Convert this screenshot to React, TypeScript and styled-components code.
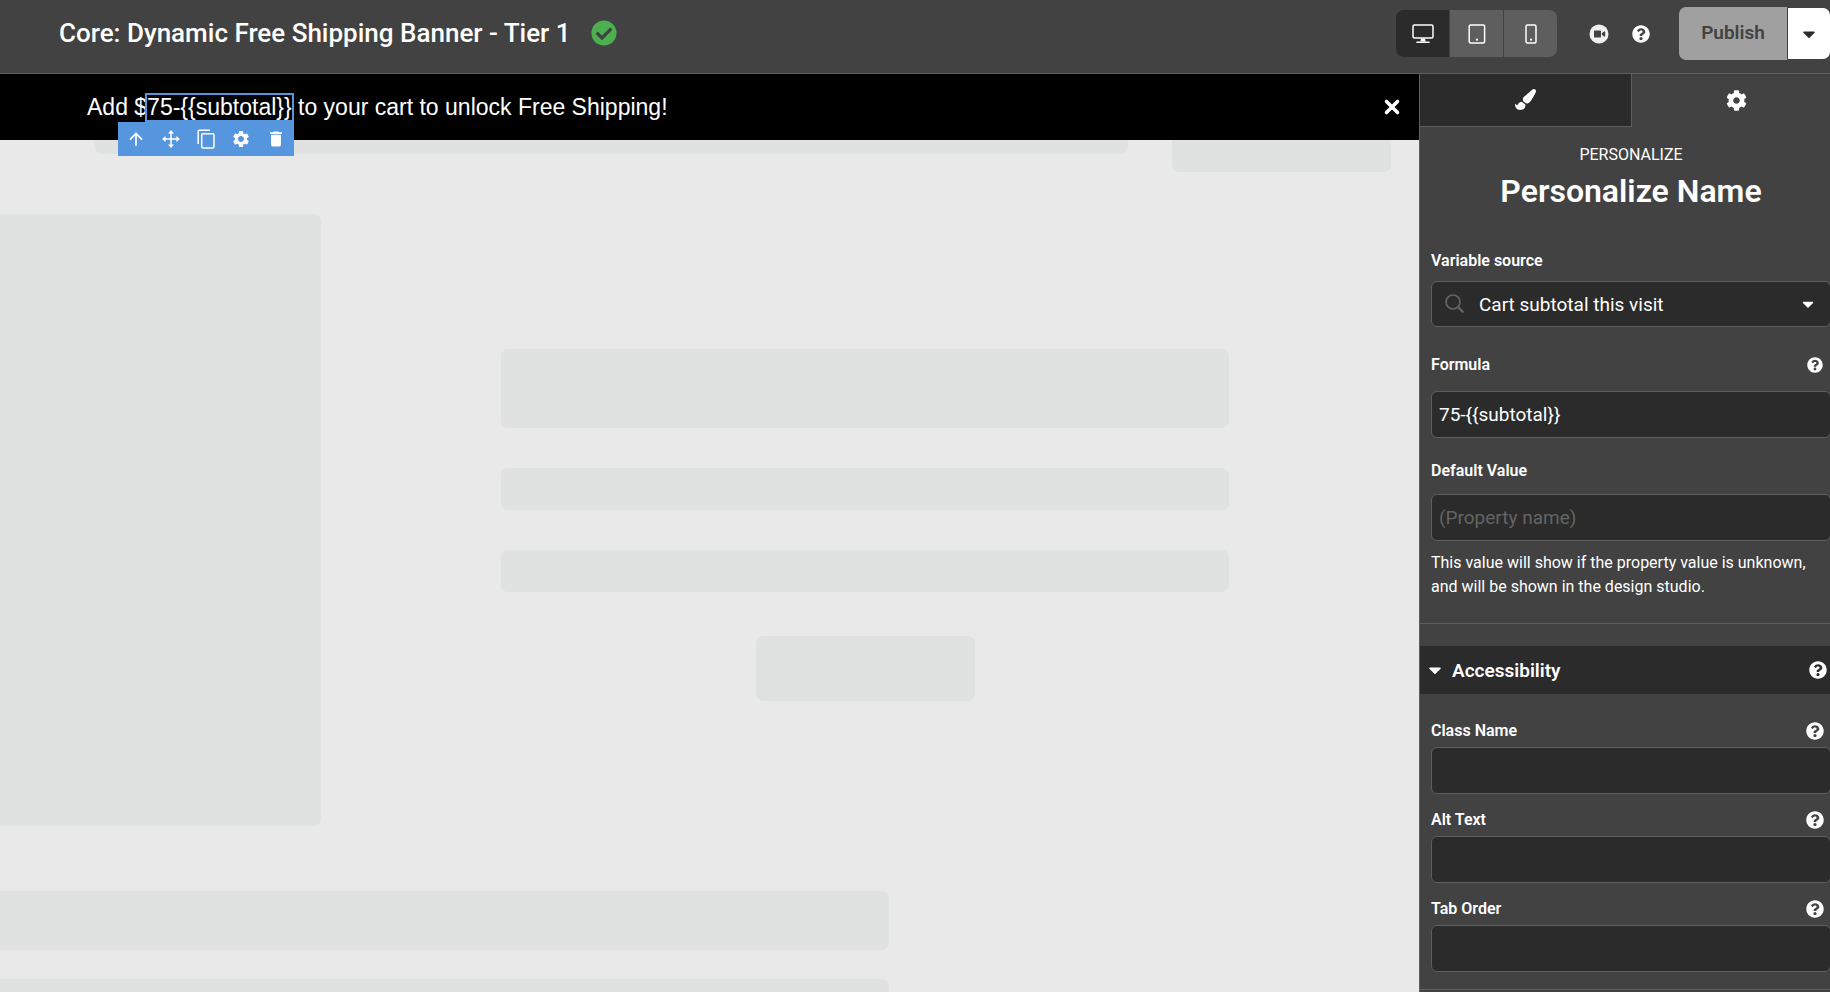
import React from "react";
import styled, { createGlobalStyle, css } from "styled-components";
import { FaCaretDown, FaCog, FaPaintBrush, FaQuestionCircle, FaCheckCircle } from "react-icons/fa";
import { MdArrowUpward, MdSettings, MdDelete } from "react-icons/md";

const color = {
  chrome: "#424242",
  dark: "#2b2b2b",
  line: "#5e5e5e",
  canvas: "#e9e9e9",
  block: "#dfe2e1",
  accent: "#5596de",
  white: "#ffffff",
};

const GlobalStyle = createGlobalStyle`
  *, *::before, *::after { box-sizing: border-box; }
  body {
    margin: 0;
    background: ${color.chrome};
    color: ${color.white};
    font-family: Roboto, "Liberation Sans", sans-serif;
    font-size: 16px;
  }
  button, input, select { font: inherit; color: inherit; margin: 0; }
  button { padding: 0; border: 0; cursor: pointer; }
  h1, h2, h3, p { margin: 0; }
  svg { display: block; flex: none; }
`;

const Studio = styled.div`
  display: flex;
  flex-direction: column;
  height: 100vh;
  overflow: hidden;
`;

const Header = styled.header`
  display: flex;
  align-items: center;
  flex: none;
  padding: 7px 0 13px 59px;
  border-bottom: 1px solid ${color.line};
`;

const CampaignName = styled.div`
  display: flex;
  align-items: center;
  gap: 20px;
  padding-bottom: 2px;
`;

const Title = styled.h1`
  font-size: 26px;
  line-height: 32px;
  font-weight: 500;
  white-space: nowrap;
`;

const Saved = styled.span`
  color: #4caf50;
  font-size: 26px;
`;

const DeviceSwitch = styled.div`
  display: flex;
  gap: 1px;
  margin-left: auto;
  height: 47px;
  border-radius: 8px;
  overflow: hidden;
`;

const DeviceButton = styled.button<{ $active?: boolean }>`
  display: flex;
  align-items: center;
  justify-content: center;
  width: 53px;
  background: ${(p) => (p.$active ? color.dark : color.line)};
`;

const HeaderIcons = styled.div`
  display: flex;
  align-items: center;
  gap: 23px;
  margin: 0 29px 0 32px;
`;

const IconButton = styled.button<{ $size: number }>`
  display: flex;
  justify-content: center;
  min-width: 18px;
  background: none;
  color: ${color.white};
  font-size: ${(p) => p.$size}px;
`;

const PublishGroup = styled.div`
  display: flex;
  align-items: center;
  gap: 1px;
`;

const PublishButton = styled.button`
  width: 108px;
  height: 53px;
  padding-bottom: 2px;
  border-radius: 7px 0 0 7px;
  background: #a0a0a0;
  color: ${color.chrome};
  font-size: 19px;
  font-weight: 600;
`;

const PublishMenu = styled.button`
  display: flex;
  align-items: center;
  justify-content: center;
  width: 42px;
  height: 51px;
  border-radius: 0 7px 7px 0;
  background: ${color.white};
  color: ${color.dark};
  font-size: 20px;
`;

const Workspace = styled.div`
  display: flex;
  flex: 1;
  min-height: 0;
`;

const Canvas = styled.main`
  flex: 1;
  min-width: 0;
  overflow: hidden;
  background: ${color.canvas};
`;

const Banner = styled.div`
  display: flex;
  align-items: center;
  justify-content: space-between;
  height: 66px;
  padding: 0 18px 0 87px;
  background: #000;
`;

const BannerText = styled.p`
  font-family: "Liberation Sans", Arial, sans-serif;
  font-size: 23px;
  line-height: 25px;
  white-space: nowrap;
`;

const Selection = styled.span`
  position: relative;
  display: inline-block;
  outline: 2px solid ${color.accent};
`;

const SelectionTools = styled.div`
  position: absolute;
  z-index: 1;
  top: 27px;
  left: -29px;
  right: -2px;
  display: flex;
  align-items: center;
  height: 34px;
  background: ${color.accent};
`;

const ToolButton = styled.button`
  display: flex;
  flex: 1;
  align-items: center;
  justify-content: center;
  background: none;
  color: ${color.white};
  font-size: 20px;
`;

const Block = styled.div<{ $height: number; $width?: number }>`
  flex: ${(p) => (p.$width ? "none" : "auto")};
  width: ${(p) => (p.$width ? `${p.$width}px` : "auto")};
  height: ${(p) => p.$height}px;
  border-radius: 7px;
  background: ${color.block};
`;

const SiteNav = styled.div`
  display: flex;
  gap: 44px;
  height: 74px;
  padding: 0 28px 0 95px;
  & > ${Block} {
    border-top-left-radius: 0;
    border-top-right-radius: 0;
  }
`;

const SiteHero = styled.div`
  display: flex;
  & > ${Block}:first-child {
    border-top-left-radius: 0;
    border-bottom-left-radius: 0;
  }
`;

const HeroCopy = styled.div`
  display: flex;
  flex: 1;
  flex-direction: column;
  gap: 40px;
  padding: 135px 190px 0 180px;
  & > ${Block} {
    flex: none;
  }
`;

const HeroAction = styled.div`
  display: flex;
  justify-content: center;
  padding-top: 4px;
`;

const SiteFooter = styled.div`
  display: flex;
  flex-direction: column;
  gap: 29px;
  padding: 65px 530px 0 0;
  & > ${Block} {
    border-top-left-radius: 0;
    border-bottom-left-radius: 0;
  }
`;

const Panel = styled.aside`
  flex: none;
  width: 411px;
  overflow: hidden;
  border-left: 1px solid ${color.line};
`;

/* The settings column is a little wider than the visible panel. */
const PanelBody = styled.div`
  width: 422px;
`;

const Tabs = styled.div`
  display: flex;
  height: 53px;
`;

const Tab = styled.button<{ $active?: boolean }>`
  display: flex;
  flex: 1;
  align-items: center;
  justify-content: center;
  padding-bottom: 1px;
  background: none;
  font-size: 21px;
  ${(p) =>
    !p.$active &&
    css`
      background: ${color.dark};
      border-right: 1px solid ${color.line};
      border-bottom: 1px solid ${color.line};
    `}
`;

const PanelHeading = styled.div`
  display: flex;
  flex-direction: column;
  align-items: center;
  padding: 16px 0 34px;
`;

const Eyebrow = styled.p`
  line-height: 24px;
`;

const ElementName = styled.h2`
  font-size: 32px;
  line-height: 48px;
  font-weight: 600;
`;

const Section = styled.div<{ $top: number; $bottom: number }>`
  padding: ${(p) => p.$top}px 11px ${(p) => p.$bottom}px;
  border-bottom: 1px solid ${color.line};
`;

const FieldHead = styled.div<{ $space: number }>`
  display: flex;
  align-items: center;
  justify-content: space-between;
  height: 24px;
  padding-right: 7px;
  margin-bottom: ${(p) => p.$space}px;
`;

const Label = styled.label`
  line-height: 24px;
  font-weight: 600;
`;

const Field = styled.div<{ $after: number }>`
  margin-bottom: ${(p) => p.$after}px;
`;

const TextInput = styled.input`
  display: block;
  width: 100%;
  height: 47px;
  padding: 0 7px;
  border: 1px solid ${color.line};
  border-radius: 6px;
  background: ${color.dark};
  font-size: 19px;
  outline: none;
  &::placeholder {
    color: #646464;
    opacity: 1;
  }
`;

const SelectBox = styled.div`
  display: flex;
  align-items: center;
  height: 46px;
  padding: 0 13px;
  border: 1px solid ${color.line};
  border-radius: 6px;
  background: ${color.dark};
`;

const Select = styled.select`
  flex: 1;
  min-width: 0;
  padding: 0;
  margin: 0 14px;
  border: 0;
  appearance: none;
  background: transparent;
  font-size: 19px;
  outline: none;
`;

const Hint = styled.p`
  padding-top: 10px;
  line-height: 24px;
`;

const AccordionBar = styled.div`
  display: flex;
  align-items: center;
  justify-content: space-between;
  height: 48px;
  margin-top: 22px;
  padding: 0 15px 0 5px;
  background: ${color.dark};
`;

const AccordionToggle = styled.button`
  display: flex;
  align-items: center;
  gap: 7px;
  background: none;
  font-size: 19px;
  font-weight: 600;
`;

const DesktopIcon = () => (
  <svg width="22" height="20" viewBox="0 0 22 20" fill="none" stroke="currentColor">
    <rect x="1" y="1" width="20" height="13" rx="1.5" strokeWidth="1.5" />
    <path d="M9 14.5h4l.6 3H8.4z" fill="currentColor" stroke="none" />
    <path d="M5 18.2h12" strokeWidth="1.6" strokeLinecap="round" />
  </svg>
);

const TabletIcon = () => (
  <svg width="18" height="20" viewBox="0 0 18 20" fill="none" stroke="currentColor" strokeWidth="1.5">
    <rect x="1.2" y="1" width="15.4" height="18" rx="1.5" />
    <circle cx="9" cy="15.7" r="1.1" fill="currentColor" stroke="none" />
  </svg>
);

const PhoneIcon = () => (
  <svg width="12" height="20" viewBox="0 0 12 20" fill="none" stroke="currentColor" strokeWidth="1.5">
    <rect x="1" y="1" width="10" height="18" rx="1.5" />
    <circle cx="6" cy="15.7" r="1.1" fill="currentColor" stroke="none" />
  </svg>
);

const VideoIcon = () => (
  <svg width="20" height="20" viewBox="0 0 20 20">
    <circle cx="10" cy="10" r="9.5" fill="#f1f1f1" />
    <rect x="5" y="6.5" width="7" height="7" rx=".6" fill={color.chrome} />
    <path d="M12.8 9.2 15 7.4q1.2-.5 1.2.6v4q0 1.1-1.2.6l-2.2-1.8z" fill={color.chrome} />
  </svg>
);

const MoveIcon = () => (
  <svg width="18" height="18" viewBox="0 0 18 18">
    <path d="M9 2v14M2 9h14" stroke="currentColor" strokeWidth="1.5" />
    <path d="M9 0l3 3.6H6zM9 18l3-3.6H6zM0 9l3.6-3v6zM18 9l-3.6-3v6z" fill="currentColor" />
  </svg>
);

const CopyIcon = () => (
  <svg width="18" height="20" viewBox="0 0 18 20" fill="none" stroke="currentColor" strokeWidth="1.5">
    <path d="M1.2 15V2.2q0-1 1-1H13" />
    <rect x="4.7" y="4.7" width="12.3" height="14.3" rx="1.3" />
  </svg>
);

const CloseIcon = () => (
  <svg width="18" height="18" viewBox="0 0 18 18" fill="none" stroke="currentColor">
    <path d="M3.5 3.5l11 11M14.5 3.5l-11 11" strokeWidth="3.6" strokeLinecap="round" />
  </svg>
);

const SearchIcon = () => (
  <svg width="20" height="20" viewBox="0 0 20 20" fill="none" stroke="#646464">
    <circle cx="8" cy="8" r="7" strokeWidth="1.7" />
    <path d="M13 13l5.5 5.5" strokeWidth="2.2" />
  </svg>
);

type FieldProps = {
  id: string;
  label: string;
  space: number;
  after: number;
  helpSize?: number;
  children: React.ReactNode;
};

const LabeledField = ({ id, label, space, after, helpSize, children }: FieldProps) => (
  <Field $after={after}>
    <FieldHead $space={space}>
      <Label htmlFor={id}>{label}</Label>
      {helpSize && (
        <IconButton $size={helpSize} aria-label={`Help: ${label}`}>
          <FaQuestionCircle />
        </IconButton>
      )}
    </FieldHead>
    {children}
  </Field>
);

const accessibilityFields = [
  { id: "class-name", label: "Class Name" },
  { id: "alt-text", label: "Alt Text" },
  { id: "tab-order", label: "Tab Order" },
];

export default function App() {
  return (
    <Studio>
      <GlobalStyle />
      <Header>
        <CampaignName>
          <Title>Core: Dynamic Free Shipping Banner - Tier 1</Title>
          <Saved>
            <FaCheckCircle />
          </Saved>
        </CampaignName>
        <DeviceSwitch>
          <DeviceButton $active aria-label="Desktop">
            <DesktopIcon />
          </DeviceButton>
          <DeviceButton aria-label="Tablet">
            <TabletIcon />
          </DeviceButton>
          <DeviceButton aria-label="Phone">
            <PhoneIcon />
          </DeviceButton>
        </DeviceSwitch>
        <HeaderIcons>
          <IconButton $size={20} aria-label="Video tutorial">
            <VideoIcon />
          </IconButton>
          <IconButton $size={18} aria-label="Help">
            <FaQuestionCircle />
          </IconButton>
        </HeaderIcons>
        <PublishGroup>
          <PublishButton>Publish</PublishButton>
          <PublishMenu aria-label="Publish options">
            <FaCaretDown />
          </PublishMenu>
        </PublishGroup>
      </Header>

      <Workspace>
        <Canvas>
          <Banner>
            <BannerText>
              Add $
              <Selection>
                75-{"{{subtotal}}"}
                <SelectionTools>
                  <ToolButton aria-label="Select parent">
                    <MdArrowUpward />
                  </ToolButton>
                  <ToolButton aria-label="Move">
                    <MoveIcon />
                  </ToolButton>
                  <ToolButton aria-label="Duplicate">
                    <CopyIcon />
                  </ToolButton>
                  <ToolButton aria-label="Settings">
                    <MdSettings />
                  </ToolButton>
                  <ToolButton aria-label="Delete">
                    <MdDelete />
                  </ToolButton>
                </SelectionTools>
              </Selection>{" "}
              to your cart to unlock Free Shipping!
            </BannerText>
            <IconButton $size={18} aria-label="Close banner">
              <CloseIcon />
            </IconButton>
          </Banner>
          <SiteNav>
            <Block $height={14} />
            <Block $height={32} $width={219} />
          </SiteNav>
          <SiteHero>
            <Block $height={612} $width={321} />
            <HeroCopy>
              <Block $height={79} />
              <Block $height={42} />
              <Block $height={42} />
              <HeroAction>
                <Block $height={65} $width={219} />
              </HeroAction>
            </HeroCopy>
          </SiteHero>
          <SiteFooter>
            <Block $height={59} />
            <Block $height={59} />
          </SiteFooter>
        </Canvas>

        <Panel>
          <PanelBody>
            <Tabs>
              <Tab aria-label="Style">
                <FaPaintBrush />
              </Tab>
              <Tab $active aria-label="Settings">
                <FaCog />
              </Tab>
            </Tabs>
            <PanelHeading>
              <Eyebrow>PERSONALIZE</Eyebrow>
              <ElementName>Personalize Name</ElementName>
            </PanelHeading>
            <Section $top={0} $bottom={24}>
              <LabeledField id="source" label="Variable source" space={8} after={26}>
                <SelectBox>
                  <SearchIcon />
                  <Select id="source">
                    <option>Cart subtotal this visit</option>
                  </Select>
                  <FaCaretDown size={18} />
                </SelectBox>
              </LabeledField>
              <LabeledField id="formula" label="Formula" space={14} after={21} helpSize={16}>
                <TextInput id="formula" defaultValue="75-{{subtotal}}" />
              </LabeledField>
              <LabeledField id="default" label="Default Value" space={11} after={0}>
                <TextInput id="default" placeholder="(Property name)" />
              </LabeledField>
              <Hint>
                This value will show if the property value is unknown, and will be shown in the
                design studio.
              </Hint>
            </Section>
            <AccordionBar>
              <AccordionToggle aria-expanded="true">
                <FaCaretDown size={20} />
                Accessibility
              </AccordionToggle>
              <IconButton $size={18} aria-label="Help: Accessibility">
                <FaQuestionCircle />
              </IconButton>
            </AccordionBar>
            <Section $top={25} $bottom={3}>
              {accessibilityFields.map((f) => (
                <LabeledField key={f.id} id={f.id} label={f.label} space={4} after={14} helpSize={18}>
                  <TextInput id={f.id} />
                </LabeledField>
              ))}
            </Section>
          </PanelBody>
        </Panel>
      </Workspace>
    </Studio>
  );
}
